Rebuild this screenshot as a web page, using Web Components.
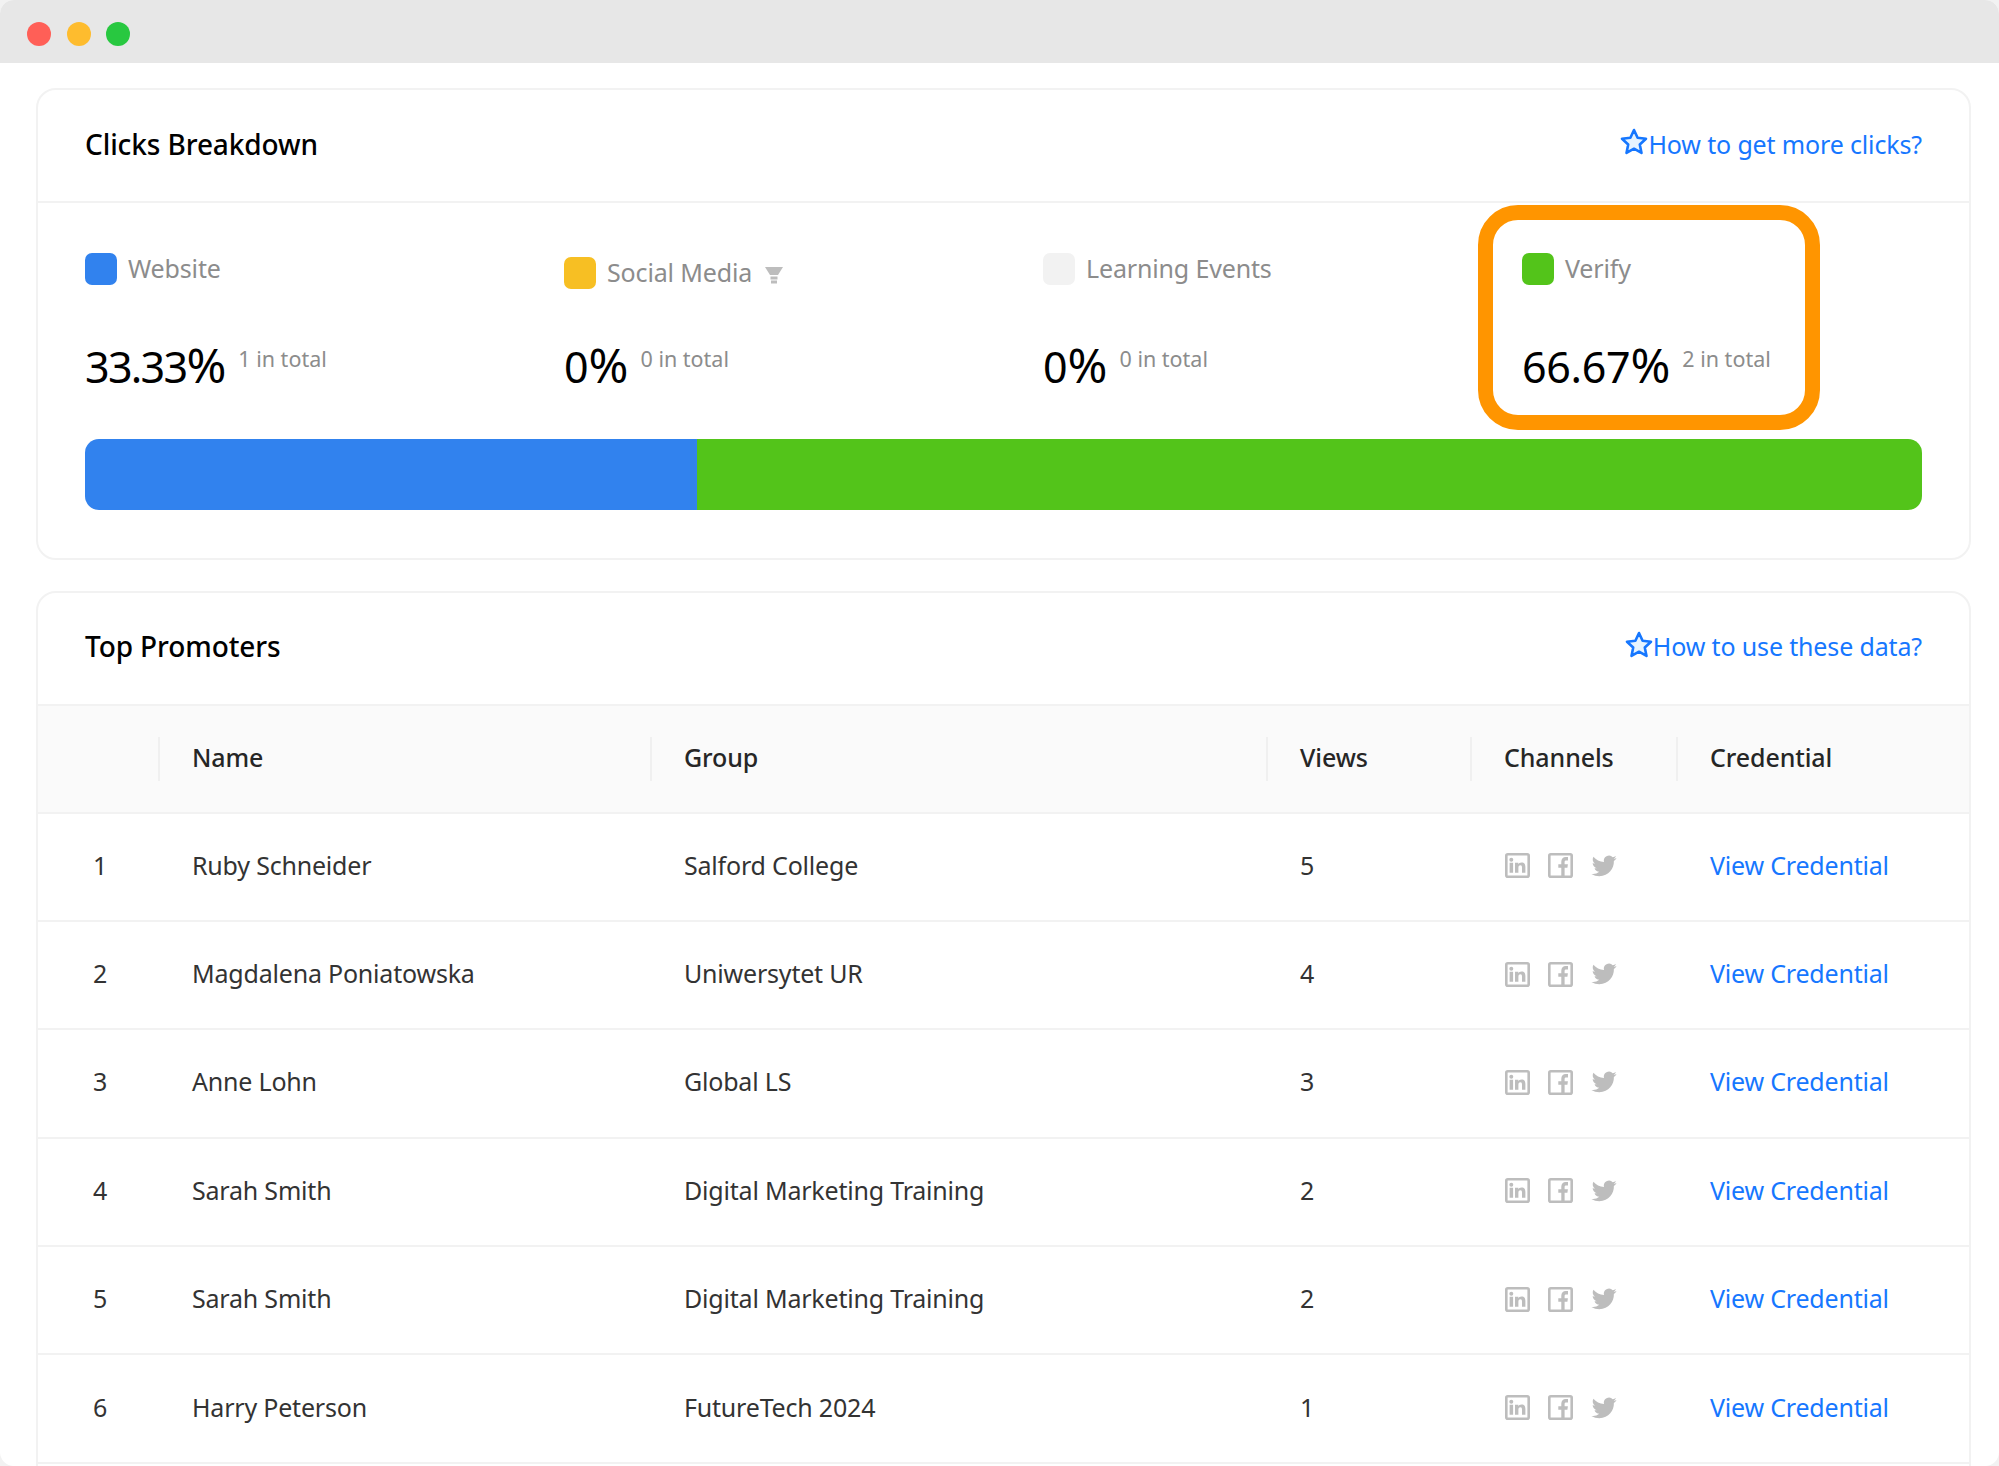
<!doctype html>
<html>
<head>
<meta charset="utf-8">
<style>
  html, body { margin: 0; background: #f2f2f2; }
  body { font-family: "Noto Sans", sans-serif; }
</style>
</head>
<body>
<app-window>
  <panel-card heading="Clicks Breakdown" link="How to get more clicks?">
    <clicks-breakdown></clicks-breakdown>
  </panel-card>
  <panel-card heading="Top Promoters" link="How to use these data?">
    <promoter-table></promoter-table>
  </panel-card>
</app-window>

<script>
const FONT = '"Noto Sans", "Liberation Sans", sans-serif';

class AppWindow extends HTMLElement {
  constructor() {
    super();
    this.attachShadow({ mode: 'open' });
    this.shadowRoot.innerHTML = `
      <style>
        :host { display: block; height: 1466px; overflow: hidden; border-radius: 14px; background: #fff; font-family: ${FONT}; }
        .bar { height: 63px; background: #e7e7e7; display: flex; align-items: center; gap: 15.5px; padding-left: 27px; }
        .dot { width: 24px; height: 24px; border-radius: 50%; margin-top: 4px; }
        .content { display: flex; flex-direction: column; gap: 31px; padding: 25px 28px 0 36px; }
      </style>
      <div class="bar">
        <span class="dot" style="background:#ff5f57"></span>
        <span class="dot" style="background:#febc2e"></span>
        <span class="dot" style="background:#28c840"></span>
      </div>
      <div class="content"><slot></slot></div>
    `;
  }
}
customElements.define('app-window', AppWindow);

class PanelCard extends HTMLElement {
  constructor() {
    super();
    this.attachShadow({ mode: 'open' });
    this.shadowRoot.innerHTML = `
      <style>
        :host { display: block; border: 2px solid #f2f2f2; border-radius: 20px; background: #fff; }
        header { height: 107px; display: flex; align-items: center; justify-content: space-between; padding: 0 47px 4px; border-bottom: 2px solid #f2f2f2; }
        h2 { margin: 0; font-size: 28px; font-weight: 500; color: #000; letter-spacing: -0.1px; }
        a { display: flex; align-items: center; color: #1677ff; font-size: 25px; letter-spacing: -0.15px; text-decoration: none; }
        svg { width: 28px; height: 28px; margin-top: -3px; }
      </style>
      <header>
        <h2></h2>
        <a>
          <svg viewBox="0 0 28 28"><path d="M14 2l3.6 7.700 8.400 1-6.200 5.800 1.700 8.400-7.500-4.200-7.500 4.200 1.700-8.400L2 10.700l8.400-1z" fill="#e6f4ff" stroke="#1677ff" stroke-width="2.600" stroke-linejoin="round"/></svg>
          <span></span>
        </a>
      </header>
      <slot></slot>
    `;
    this.shadowRoot.querySelector('h2').textContent = this.getAttribute('heading');
    this.shadowRoot.querySelector('a span').textContent = this.getAttribute('link');
  }
}
customElements.define('panel-card', PanelCard);

class ClickStat extends HTMLElement {
  constructor() {
    super();
    this.attachShadow({ mode: 'open' });
    this.shadowRoot.innerHTML = `
      <style>
        :host { display: block; }
        .label { display: flex; align-items: center; height: 32px; color: #8c8c8c; font-size: 25px; letter-spacing: -0.15px; }
        .swatch { width: 32px; height: 32px; border-radius: 7px; margin-right: 11px; background: var(--swatch); }
        .name { margin-top: -2px; }
        .funnel { width: 18px; height: 18px; margin: 4px 0 0 13px; }
        .value { display: flex; align-items: flex-start; margin-top: 50px; height: 60px; }
        b { font-weight: 400; font-size: 48px; line-height: 60px; color: #000; }
        b i { font-style: normal; font-size: 43px; letter-spacing: var(--digits, 0); }
        small { font-size: 21.5px; color: #8c8c8c; line-height: 30px; margin: 9px 0 0 12px; }
        :host([funnel]) .label { margin-top: 4px; margin-bottom: -4px; }
      </style>
      <div class="label"><span class="swatch"></span><span class="name"></span></div>
      <div class="value"><b><i></i>%</b><small></small></div>
    `;
    const root = this.shadowRoot;
    root.querySelector('.swatch').style.setProperty('--swatch', this.getAttribute('color'));
    root.querySelector('.name').textContent = this.getAttribute('name');
    root.querySelector('b i').textContent = this.getAttribute('percent');
    root.querySelector('small').textContent = this.getAttribute('total');
    if (this.hasAttribute('digits')) root.querySelector('b').style.setProperty('--digits', this.getAttribute('digits'));
    if (this.hasAttribute('funnel')) {
      root.querySelector('.label').insertAdjacentHTML('beforeend',
        '<svg class="funnel" viewBox="0 0 18 18" fill="#bdbdbd"><path d="M0 1h18l-5 8H5z"/><path d="M5.500 10.500h7v3h-7z"/><path d="M6 14.500h6v3H6z"/></svg>');
    }
  }
}
customElements.define('click-stat', ClickStat);

class ClicksBreakdown extends HTMLElement {
  constructor() {
    super();
    this.attachShadow({ mode: 'open' });
    this.shadowRoot.innerHTML = `
      <style>
        :host { display: block; position: relative; padding: 50px 47px 47.5px; }
        .stats { display: grid; grid-template-columns: 479px 479px 479px 1fr; }
        .verify-ring { position: absolute; left: 1440px; top: 2px; width: 342px; height: 225px; box-sizing: border-box; border: 15px solid #ff9500; border-radius: 40px; }
        .progress { display: flex; height: 71px; margin-top: 44px; border-radius: 14px; overflow: hidden; }
        .progress .web { width: 612px; background: #3182ee; }
        .progress .ver { flex: 1; background: #53c41a; }
      </style>
      <div class="stats">
        <click-stat color="#3182ee" name="Website" percent="33.33" total="1 in total" digits="-1.700px"></click-stat>
        <click-stat color="#f7bf23" name="Social Media" percent="0" total="0 in total" funnel></click-stat>
        <click-stat color="#f2f2f2" name="Learning Events" percent="0" total="0 in total"></click-stat>
        <click-stat color="#53c41a" name="Verify" percent="66.67" total="2 in total" digits="-0.300px"></click-stat>
      </div>
      <div class="progress"><span class="web"></span><span class="ver"></span></div>
      <div class="verify-ring"></div>
    `;
  }
}
customElements.define('clicks-breakdown', ClicksBreakdown);

class ChannelIcons extends HTMLElement {
  constructor() {
    super();
    this.attachShadow({ mode: 'open' });
    this.shadowRoot.innerHTML = `
      <style>
        :host { display: flex; gap: 18px; align-items: center; }
        svg { width: 25px; height: 25px; display: block; }
        svg.bird { width: 26px; height: 26px; }
      </style>
      <svg viewBox="0 0 25 25"><rect x="1.300" y="1.300" width="22.400" height="22.400" rx="1.500" fill="none" stroke="#bdbdbd" stroke-width="2.600"/><path fill="#bdbdbd" d="M4.600 9.800h3.500v10H4.600zM6.300 4.800a2 2 0 1 1 0 4 2 2 0 0 1 0-4zM10 9.800h3.300v1.400c.5-.9 1.600-1.700 3.200-1.700 3.100 0 3.900 2 3.900 4.700v5.600h-3.400v-5c0-1.200-.1-2.600-1.600-2.600-1.500 0-2 1.200-2 2.500v5.100H10z"/></svg>
      <svg viewBox="0 0 25 25"><rect x="1.300" y="1.300" width="22.400" height="22.400" rx="1.500" fill="none" stroke="#bdbdbd" stroke-width="2.600"/><path fill="#bdbdbd" d="M13.300 24v-9.200h-3v-3.600h3V8.700c0-3.100 1.800-4.700 4.500-4.700.9 0 1.800.1 2.200.1v3.300h-1.700c-1.400 0-1.700.7-1.700 1.700v2.100h3.300l-.5 3.600h-2.800V24z"/></svg>
      <svg class="bird" viewBox="0 0 25 25"><path fill="#bdbdbd" d="M24.600 4.900c-.9.4-1.800.7-2.800.8 1-.6 1.800-1.600 2.200-2.700-1 .6-2 1-3.100 1.200a4.900 4.900 0 0 0-8.400 4.500C8.400 8.500 4.800 6.500 2.300 3.600c-1.300 2.300-.7 5.200 1.500 6.600-.8 0-1.500-.2-2.200-.6 0 2.400 1.700 4.500 4 5-.7.2-1.500.2-2.200.1.6 2 2.500 3.400 4.600 3.400A10 10 0 0 1 .4 20.100a14 14 0 0 0 7.600 2.200c9.100 0 14.300-7.700 14-14.600 1-.7 1.900-1.600 2.600-2.800z"/></svg>
    `;
  }
}
customElements.define('channel-icons', ChannelIcons);

const COLUMNS = '122px 492px 616px 204px 206px 1fr';
const PROMOTERS = [
  ['1', 'Ruby Schneider', 'Salford College', '5'],
  ['2', 'Magdalena Poniatowska', 'Uniwersytet UR', '4'],
  ['3', 'Anne Lohn', 'Global LS', '3'],
  ['4', 'Sarah Smith', 'Digital Marketing Training', '2'],
  ['5', 'Sarah Smith', 'Digital Marketing Training', '2'],
  ['6', 'Harry Peterson', 'FutureTech 2024', '1'],
];

class PromoterRow extends HTMLElement {
  set data(p) {
    this.attachShadow({ mode: 'open' });
    this.shadowRoot.innerHTML = `
      <style>
        :host { display: grid; grid-template-columns: ${COLUMNS}; height: 102.4px; padding-bottom: 4px; align-items: center; border-bottom: 2px solid #f2f2f2; color: #333; font-size: 25px; letter-spacing: -0.2px; }
        div { padding-left: 32px; }
        .num { padding-left: 55px; }
        .chan { padding-left: 33px; padding-top: 2px; }
        a { color: #1677ff; text-decoration: none; }
      </style>
      <div class="num">${p[0]}</div>
      <div>${p[1]}</div>
      <div>${p[2]}</div>
      <div>${p[3]}</div>
      <div class="chan"><channel-icons></channel-icons></div>
      <div><a>View Credential</a></div>
    `;
  }
}
customElements.define('promoter-row', PromoterRow);

class PromoterTable extends HTMLElement {
  constructor() {
    super();
    this.attachShadow({ mode: 'open' });
    this.shadowRoot.innerHTML = `
      <style>
        :host { display: block; padding-bottom: 40px; }
        .head { display: grid; grid-template-columns: ${COLUMNS}; height: 106px; align-items: center; background: #fafafa; border-bottom: 2px solid #f2f2f2; font-size: 25px; font-weight: 500; color: #262626; letter-spacing: -0.1px; }
        .head div { margin-left: -2px; padding-left: 32px; border-left: 2px solid #f0f0f0; height: 44px; line-height: 41px; }
        .head div:first-child { border-left: 0; margin-left: 0; }
      </style>
      <div class="head">
        <div></div><div>Name</div><div>Group</div><div>Views</div><div>Channels</div><div>Credential</div>
      </div>
    `;
    PROMOTERS.forEach((p) => {
      const row = document.createElement('promoter-row');
      row.data = p;
      this.shadowRoot.appendChild(row);
    });
  }
}
customElements.define('promoter-table', PromoterTable);
</script>
</body>
</html>
